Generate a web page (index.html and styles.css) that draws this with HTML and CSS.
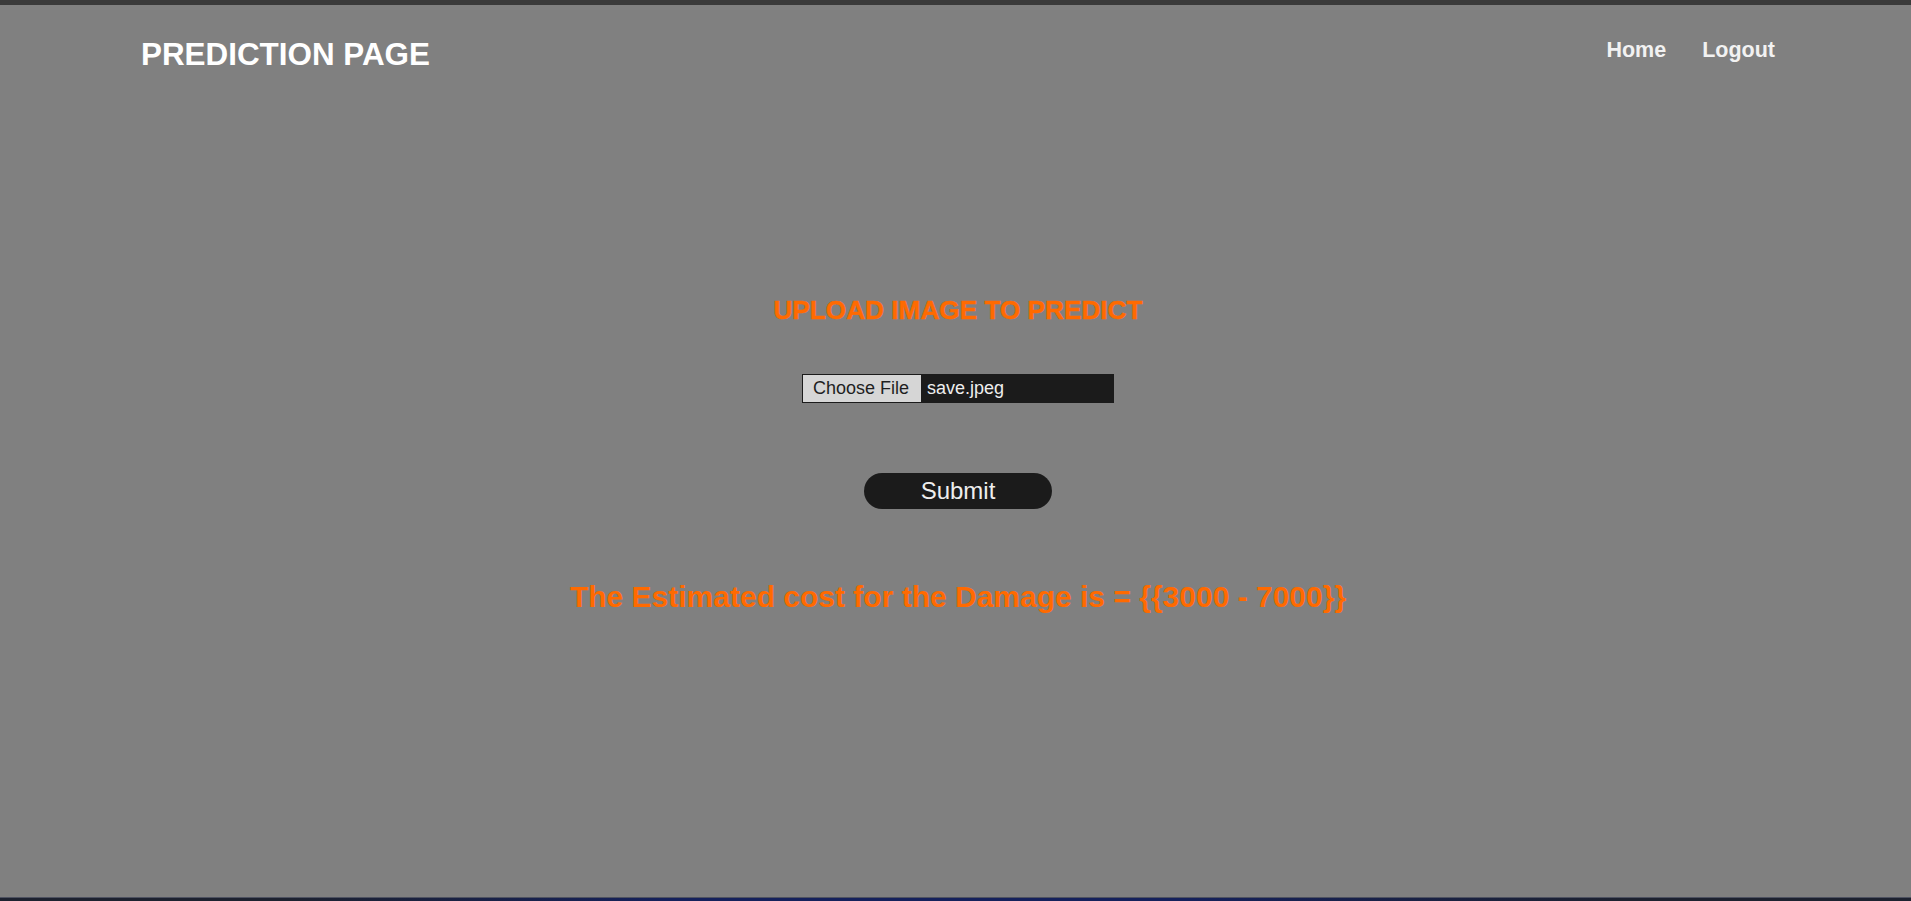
FILE: index.html
```html
<!DOCTYPE html>
<html lang="en">
<head>
<meta charset="utf-8">
<title>Prediction Page</title>
<link rel="stylesheet" href="styles.css">
</head>
<body>
<div class="topbar"></div>
<div class="page">
  <header class="header">
    <h1 class="brand">PREDICTION PAGE</h1>
    <nav class="nav">
      <a class="nav-link" href="#">Home</a>
      <a class="nav-link" href="#">Logout</a>
    </nav>
  </header>
  <main class="main">
    <h2 class="upload-title">UPLOAD IMAGE TO PREDICT</h2>
    <form class="form">
      <label class="file">
        <span class="file-btn">Choose File</span>
        <span class="file-name">save.jpeg</span>
      </label>
      <button class="submit" type="button">Submit</button>
    </form>
    <p class="result">The Estimated cost for the Damage is = {{3000 - 7000}}</p>
  </main>
</div>
<div class="bottombar"></div>
</body>
</html>
```
FILE: styles.css
```css
* { box-sizing: border-box; }
html, body { margin: 0; padding: 0; height: 100%; }
body {
  display: flex;
  flex-direction: column;
  background: #808080;
  font-family: "Liberation Sans", Arial, sans-serif;
  overflow: hidden;
}
.topbar { height: 5px; background: #3a3a3a; flex: none; }
.page { flex: 1; display: flex; flex-direction: column; }
.header {
  display: flex;
  justify-content: space-between;
  align-items: flex-start;
  padding: 32px 136px 0 141px;
}
.brand {
  margin: 0;
  font-size: 31.4px;
  line-height: 36px;
  font-weight: bold;
  color: #ffffff;
}
.nav { display: flex; gap: 36px; }
.nav-link {
  font-size: 21.5px;
  line-height: 26px;
  font-weight: bold;
  color: #f2f2f2;
  text-decoration: none;
}
.main {
  display: flex;
  flex-direction: column;
  align-items: center;
  padding: 222px 0 0 5px;
}
.upload-title {
  margin: 0;
  font-size: 26.2px;
  line-height: 30px;
  font-weight: bold;
  color: #ff6a00;
  -webkit-text-stroke: 0.5px #ff6a00;
}
.form {
  display: flex;
  flex-direction: column;
  align-items: center;
  margin-top: 49px;
}
.file {
  display: flex;
  width: 312px;
  height: 29px;
  background: #1b1b1b;
  border: 1px solid #1b1b1b;
}
.file-btn {
  width: 118px;
  background: #d6d6d6;
  color: #1f1f1f;
  font-size: 18px;
  line-height: 27px;
  padding-left: 10px;
}
.file-name {
  color: #eeeeee;
  font-size: 18px;
  line-height: 27px;
  padding-left: 6px;
}
.submit {
  margin-top: 70px;
  width: 188px;
  height: 36px;
  border: none;
  border-radius: 18px;
  background: #1b1b1b;
  color: #eeeeee;
  font-family: "Liberation Sans", Arial, sans-serif;
  font-size: 24px;
  line-height: 36px;
  padding: 0;
}
.result {
  margin: 71px 0 0;
  font-size: 30px;
  line-height: 34px;
  font-weight: bold;
  color: #ff6a00;
}
.bottombar {
  height: 4px;
  flex: none;
  border-top: 1px solid #4e5260;
  background: linear-gradient(to right, #1d2230 0%, #1d2230 15%, #15215c 35%, #15215c 62%, #1d2230 85%, #1d2230 100%);
}
```
